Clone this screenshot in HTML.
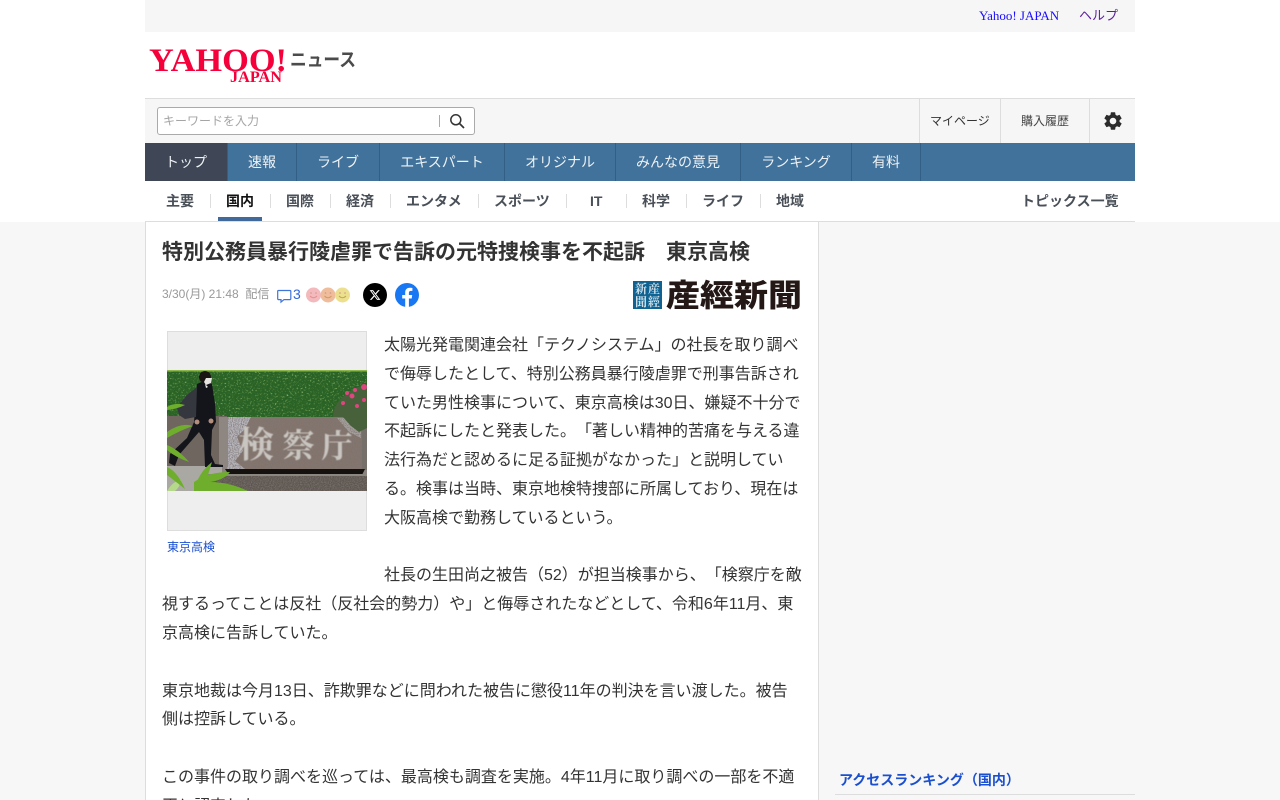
<!DOCTYPE html>
<html lang="ja"><head><meta charset="utf-8"><title>特別公務員暴行陵虐罪で告訴の元特捜検事を不起訴</title>
<style>
*{box-sizing:border-box}
html,body{margin:0;padding:0;width:1280px;height:800px;overflow:hidden;background:#fff}
body{font-family:"Liberation Sans","Noto Sans CJK JP",sans-serif;color:#333;position:relative;text-spacing-trim:space-all}
.a{position:absolute;white-space:nowrap}
.nav{position:absolute;top:143px;height:38px;line-height:38px;font-size:14px;color:#eef2f5;text-align:center;border-right:1px solid #315f85}
.sub{position:absolute;top:191px;height:20px;line-height:20px;font-size:14px;font-weight:bold;color:#4a5058;white-space:nowrap}
.d{position:absolute;top:194px;width:1px;height:14px;background:#ddd}
#body p{margin:0}
</style></head><body>
<div class="a" style="left:0;top:222px;width:1280px;height:578px;background:#f7f7f7"></div>
<div class="a" style="left:145px;top:0;width:990px;height:32px;background:#f6f6f6"></div>
<div class="a" style="left:979px;top:7px;font:13px/18px 'Liberation Serif','Noto Sans CJK JP',serif;color:#1a0dff">Yahoo! JAPAN</div>
<div class="a" style="left:1079px;top:7px;font:13px/18px 'Liberation Serif','Noto Sans CJK JP',serif;color:#5a1f9e">ヘルプ</div>

<svg class="a" style="left:145px;top:40px" width="220" height="48" viewBox="0 0 220 48">
<text x="4" y="31" font-family="Liberation Serif" font-weight="bold" font-size="33" fill="#f5003a" textLength="138" lengthAdjust="spacingAndGlyphs">YAHOO!</text>
<text x="85" y="42" font-family="Liberation Serif" font-weight="bold" font-size="16" fill="#f5003a" textLength="52" lengthAdjust="spacingAndGlyphs">JAPAN</text>
<text x="145" y="26" font-family="Liberation Sans,Noto Sans CJK JP,sans-serif" font-weight="bold" font-size="19" fill="#4b4b4b" textLength="66" lengthAdjust="spacingAndGlyphs">ニュース</text>
</svg>

<div class="a" style="left:145px;top:98px;width:990px;height:45px;background:#f6f6f6;border-top:1px solid #ddd"></div>
<div class="a" style="left:157px;top:107px;width:318px;height:28px;background:#fff;border:1px solid #aaa;border-radius:3px"></div>
<div class="a" style="left:163px;top:112px;font-size:12px;line-height:18px;color:#a5a5a5">キーワードを入力</div>
<div class="a" style="left:439px;top:115px;width:1px;height:12px;background:#aaa"></div>
<svg class="a" style="left:449px;top:113px" width="16" height="16" viewBox="0 0 16 16"><circle cx="6.800" cy="6.800" r="5" fill="none" stroke="#333" stroke-width="1.500"/><path d="M10.500 10.500L15 15" stroke="#333" stroke-width="1.700"/></svg>
<div class="a" style="left:919px;top:99px;width:1px;height:44px;background:#ddd"></div>
<div class="a" style="left:1000px;top:99px;width:1px;height:44px;background:#ddd"></div>
<div class="a" style="left:1089px;top:99px;width:1px;height:44px;background:#ddd"></div>
<div class="a" style="left:930px;top:112px;font-size:12px;line-height:18px;color:#333">マイページ</div>
<div class="a" style="left:1021px;top:112px;font-size:12px;line-height:18px;color:#444">購入履歴</div>
<svg class="a" style="left:1102px;top:110px" width="22" height="22" viewBox="0 0 24 24"><path fill="#2b2b2b" d="M19.140 12.940c.04-.3.06-.61.06-.94 0-.32-.02-.64-.07-.94l2.030-1.580c.18-.14.23-.41.12-.61l-1.920-3.320c-.12-.22-.37-.29-.59-.22l-2.390.96c-.5-.38-1.030-.7-1.620-.94l-.36-2.540c-.04-.24-.24-.41-.48-.41h-3.840c-.24 0-.43.17-.47.41l-.36 2.540c-.59.24-1.130.57-1.620.94l-2.390-.96c-.22-.08-.47 0-.59.22L2.740 8.870c-.12.21-.08.47.12.61l2.030 1.580c-.05.3-.09.63-.09.94s.02.64.07.94l-2.030 1.580c-.18.14-.23.41-.12.61l1.920 3.320c.12.22.37.29.59.22l2.390-.96c.5.38 1.030.7 1.620.94l.36 2.540c.05.24.24.41.48.41h3.840c.24 0 .44-.17.47-.41l.36-2.540c.59-.24 1.130-.56 1.620-.94l2.390.96c.22.08.47 0 .59-.22l1.920-3.320c.12-.22.07-.47-.12-.61l-2.010-1.580zM12 15.600c-1.980 0-3.600-1.620-3.600-3.600s1.620-3.600 3.600-3.600 3.600 1.620 3.600 3.600-1.620 3.600-3.600 3.600z"/></svg>

<div class="a" style="left:145px;top:143px;width:990px;height:38px;background:#41729b"></div>
<div class="nav" style="left:145px;width:83px;background:#3f4756">トップ</div>
<div class="nav" style="left:228px;width:69px">速報</div>
<div class="nav" style="left:297px;width:83px">ライブ</div>
<div class="nav" style="left:380px;width:125px">エキスパート</div>
<div class="nav" style="left:505px;width:111px">オリジナル</div>
<div class="nav" style="left:616px;width:125px">みんなの意見</div>
<div class="nav" style="left:741px;width:111px">ランキング</div>
<div class="nav" style="left:852px;width:69px">有料</div>

<div class="a" style="left:145px;top:221px;width:990px;height:1px;background:#ddd"></div>
<div class="sub" style="left:166px">主要</div>
<div class="sub" style="left:226px;color:#111">国内</div>
<div class="a" style="left:218px;top:217px;width:44px;height:4px;background:#41699b"></div>
<div class="sub" style="left:286px">国際</div>
<div class="sub" style="left:346px">経済</div>
<div class="sub" style="left:406px">エンタメ</div>
<div class="sub" style="left:494px">スポーツ</div>
<div class="sub" style="left:590px">IT</div>
<div class="sub" style="left:642px">科学</div>
<div class="sub" style="left:702px">ライフ</div>
<div class="sub" style="left:776px">地域</div>
<div class="sub" style="left:1021px">トピックス一覧</div>
<div class="d" style="left:210px"></div><div class="d" style="left:270px"></div><div class="d" style="left:330px"></div><div class="d" style="left:390px"></div><div class="d" style="left:478px"></div><div class="d" style="left:566px"></div><div class="d" style="left:626px"></div><div class="d" style="left:686px"></div><div class="d" style="left:760px"></div>

<div class="a" style="left:145px;top:222px;width:674px;height:578px;background:#fff;border-left:1px solid #ddd;border-right:1px solid #ddd"></div>
<div class="a" style="left:162px;top:237px;font-size:21px;line-height:32px;font-weight:bold;color:#333">特別公務員暴行陵虐罪で告訴の元特捜検事を不起訴　東京高検</div>
<div class="a" style="left:162px;top:285px;font-size:12px;line-height:18px;color:#999">3/30(月) 21:48&nbsp; 配信</div>
<svg class="a" style="left:276px;top:288px" width="16" height="16" viewBox="0 0 16 16"><path d="M2.500 2.500h11.500a.8.8 0 0 1 .8.8v7.500a.8.8 0 0 1-.8.8H8l-3 2.500v-2.500H2.500a.8.8 0 0 1-.8-.8V3.300a.8.8 0 0 1 .8-.8z" fill="none" stroke="#3f74d8" stroke-width="1.200"/></svg>
<div class="a" style="left:293px;top:285px;font-size:14px;line-height:18px;color:#2f67d8">3</div>
<svg class="a" style="left:305px;top:286px" width="47" height="19" viewBox="0 0 47 19">
<g fill="none" stroke-width="1"><circle cx="8.500" cy="9" r="7.500" fill="#f3b9bc"/><circle cx="23" cy="9" r="7.500" fill="#efbd9c"/><circle cx="37.500" cy="9" r="7.500" fill="#ece08f"/>
<path d="M5 10q3.500 3.500 7 0" stroke="#e28f93"/><path d="M19.500 10q3.500 3.500 7 0" stroke="#d69565"/><path d="M34 10q3.500 3.500 7 0" stroke="#bda94f"/></g>
<g fill="#c98"><circle cx="6" cy="7" r=".8"/><circle cx="11" cy="7" r=".8"/><circle cx="20.500" cy="7" r=".8"/><circle cx="25.500" cy="7" r=".8"/><circle cx="35" cy="7" r=".8"/><circle cx="40" cy="7" r=".8"/></g></svg>
<svg class="a" style="left:363px;top:283px" width="24" height="24" viewBox="0 0 24 24"><circle cx="12" cy="12" r="12" fill="#000"/><path transform="translate(6 6) scale(.5)" d="M18.244 2.250h3.308l-7.227 8.260 8.502 11.240H16.170l-5.214-6.817L4.990 21.750H1.680l7.730-8.835L1.254 2.250H8.080l4.713 6.231zm-1.161 17.520h1.833L7.084 4.126H5.117z" fill="#fff"/></svg>
<svg class="a" style="left:395px;top:283px" width="24" height="24" viewBox="0 0 24 24"><circle cx="12" cy="12" r="12" fill="#1877f2"/><path d="M16.700 15.500l.5-3.500h-3.300V9.800c0-1 .5-1.900 2-1.900h1.500V5c0 0-1.400-.2-2.700-.2-2.700 0-4.500 1.700-4.500 4.600V12h-3v3.500h3V24h3.700v-8.500z" fill="#fff"/></svg>

<svg class="a" style="left:632px;top:278px" width="172" height="34" viewBox="0 0 172 34">
<rect x="1" y="3" width="29" height="28" fill="#0f6291"/>
<g font-family="Noto Serif CJK SC,serif" font-size="12" font-weight="700" fill="#cfe0e9"><text x="3" y="15">新</text><text x="16" y="15">産</text><text x="3" y="28">聞</text><text x="16" y="28">經</text></g>
<text x="34" y="28.500" font-family="Noto Sans CJK JP,sans-serif" font-weight="900" font-size="31" fill="#231815" textLength="136" lengthAdjust="spacingAndGlyphs">産經新聞</text>
</svg>

<div id="body" class="a" style="left:162px;top:332px;width:640px;white-space:normal;font-size:16px;line-height:28.800px;color:#333">
<div style="float:left;width:222px;height:238px;position:relative">
<div style="position:absolute;left:5px;top:-1px;width:200px;height:200px;background:#eee;outline:1px solid #ddd;outline-offset:-1px"></div>
<svg style="position:absolute;left:5px;top:38px" width="200" height="121" viewBox="0 0 200 121">
<defs><filter id="n" x="0" y="0" width="100%" height="100%"><feTurbulence type="fractalNoise" baseFrequency=".5" numOctaves="3" seed="4"/><feColorMatrix values="0 0 0 0 .02 0 0 0 0 .12 0 0 0 0 .02 0 0 0 3 -1"/></filter>
<filter id="l" x="0" y="0" width="100%" height="100%"><feTurbulence type="fractalNoise" baseFrequency=".6" numOctaves="2" seed="12"/><feColorMatrix values="0 0 0 0 .4 0 0 0 0 .65 0 0 0 0 .25 0 0 0 3 -1.600"/></filter>
<filter id="g" x="0" y="0" width="100%" height="100%"><feTurbulence type="fractalNoise" baseFrequency=".9" numOctaves="2" seed="9"/><feColorMatrix values="0 0 0 0 .2 0 0 0 0 .17 0 0 0 0 .16 0 0 0 2.200 -.8"/></filter>
<filter id="b"><feGaussianBlur stdDeviation=".5"/></filter></defs>
<rect width="200" height="121" fill="#8c8480"/>
<rect width="200" height="50" fill="#2f6524"/>
<rect width="200" height="50" filter="url(#l)"/>
<rect width="200" height="50" filter="url(#n)"/>
<rect width="200" height="1.500" fill="#8fb84a"/>
<rect x="0" y="46" width="60" height="50" fill="#6f6660"/>
<rect x="60" y="47" width="135" height="52" fill="#85756d"/>
<path d="M60 47h24l-6 12-8 8 6 14-8 10 10 8H60z" fill="#b9b8bf"/>
<path d="M170 48h24v20l-12-6z" fill="#a9a4a0"/>
<rect x="60" y="47" width="135" height="52" filter="url(#g)"/>
<rect x="52" y="47" width="9" height="50" fill="#8e8781"/>
<rect x="195" y="58" width="5" height="42" fill="#76706a"/>
<g font-family="Noto Serif CJK SC,serif" font-weight="700" fill="#c9c5c0" filter="url(#b)"><text x="71" y="87" font-size="36">検</text><text x="115" y="87" font-size="33">察</text><text x="154" y="87" font-size="32">庁</text></g>
<path d="M58 99h140l-3 6H62z" fill="#14110f"/>
<rect x="0" y="96" width="55" height="25" fill="#a9a8a3"/>
<rect x="40" y="105" width="160" height="16" fill="#5d564f"/><rect x="40" y="105" width="160" height="16" filter="url(#g)"/>
<rect x="40" y="104" width="160" height="2" fill="#8a8780"/>
<path d="M166 47c0-15 14-27 34-33v44l-8 4-8-6-8-9z" fill="#47613a"/>
<g fill="#e0457f"><circle cx="185" cy="26" r="2.500"/><circle cx="190" cy="36" r="2"/><circle cx="176" cy="33" r="2"/><circle cx="197" cy="17" r="3"/><circle cx="180" cy="23" r="2"/><circle cx="197" cy="30" r="2"/><circle cx="188" cy="20" r="2"/></g>
<path d="M30 14l7-3 8 3 3 20 1 18-4 8-1 25 4 9 8 1v2H38l-1-27-5-8-20 23-4 11-6-3 1-9 17-16 7-16z" fill="#14141b"/>
<path d="M30 17l-10 8-10 12 2 8 6 4 11-2z" fill="#34383e"/>
<circle cx="38" cy="7" r="6" fill="#1b1613"/><path d="M39 8h6l-1 5-5 2-2-3z" fill="#e8e6e2"/><path d="M38 14l3 3-2 1z" fill="#eee"/><circle cx="44" cy="51" r="2.500" fill="#b48e7c"/><circle cx="30" cy="52" r="2.500" fill="#b48e7c"/>
<g fill="#6fae2c"><path d="M0 37q8-5 18-2-8 4-18 5z"/><path d="M0 62q14-10 26-6-12 4-26 12z"/><path d="M0 75q12 5 22 17-14-5-22-12z"/><path d="M27 121q4-18 18-29-4 14-10 29z"/><path d="M27 112q14-10 36-10-6 8-20 10 20 0 40 10-30-2-56 0z"/><path d="M0 121q6-10 14-11-1 7-6 11z" fill="#b5d88a"/><path d="M0 97q10 4 18 22-10-8-18-14z"/></g>
</svg>
<div style="position:absolute;left:5px;top:205px;font-size:12px;line-height:20px;color:#1a4fcf">東京高検</div>
</div>
<p>太陽光発電関連会社「テクノシステム」の社長を取り調べで侮辱したとして、特別公務員暴行陵虐罪で刑事告訴されていた男性検事について、東京高検は30日、嫌疑不十分で不起訴にしたと発表した。「著しい精神的苦痛を与える違法行為だと認めるに足る証拠がなかった」と説明している。検事は当時、東京地検特捜部に所属しており、現在は大阪高検で勤務しているという。<br><br>社長の生田尚之被告（52）が担当検事から、「検察庁を敵視するってことは反社（反社会的勢力）や」と侮辱されたなどとして、令和6年11月、東京高検に告訴していた。<br><br>東京地裁は今月13日、詐欺罪などに問われた被告に懲役11年の判決を言い渡した。被告側は控訴している。<br><br>この事件の取り調べを巡っては、最高検も調査を実施。4年11月に取り調べの一部を不適正と認定した。</p>
</div>

<div class="a" style="left:839px;top:770px;font-size:14px;line-height:20px;font-weight:bold;color:#1a4fcf">アクセスランキング（国内）</div>
<div class="a" style="left:835px;top:794px;width:300px;height:1px;background:#ddd"></div>
</body></html>
